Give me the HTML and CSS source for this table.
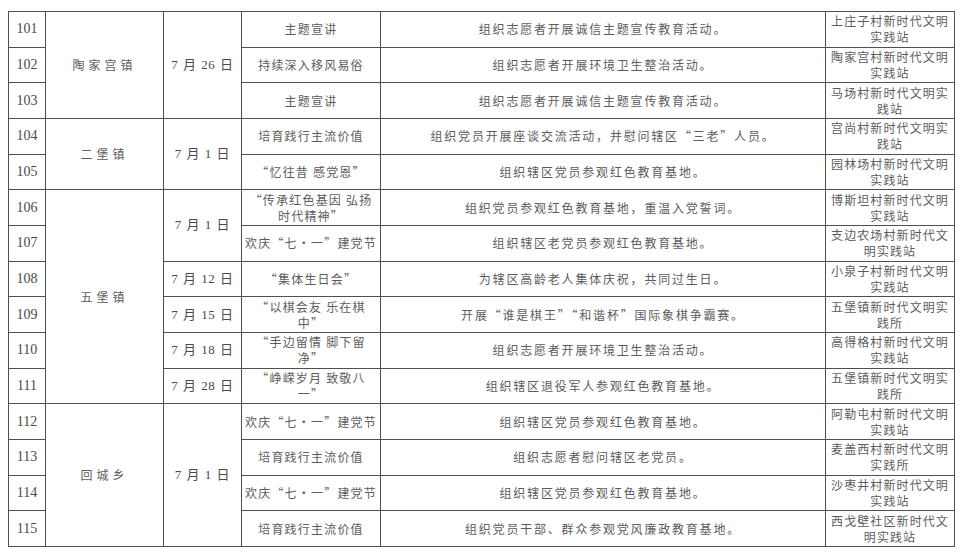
FILE: index.html
```html
<!DOCTYPE html>
<html lang="zh-CN">
<head>
<meta charset="utf-8">
<title>新时代文明实践活动</title>
<link rel="stylesheet" href="styles.css">
</head>
<body>
<table class="tbl">
<colgroup>
<col class="c-no"><col class="c-town"><col class="c-date"><col class="c-theme"><col class="c-content"><col class="c-station">
</colgroup>
<tbody>
<tr><td class="no">101</td><td class="town" rowspan="3">陶家宫镇</td><td class="date" rowspan="3">7 月 26 日</td><td class="theme">主题宣讲</td><td class="content">组织志愿者开展诚信主题宣传教育活动。</td><td class="station">上庄子村新时代文明<br>实践站</td></tr>
<tr><td class="no">102</td><td class="theme">持续深入移风易俗</td><td class="content">组织志愿者开展环境卫生整治活动。</td><td class="station">陶家宫村新时代文明<br>实践站</td></tr>
<tr><td class="no">103</td><td class="theme">主题宣讲</td><td class="content">组织志愿者开展诚信主题宣传教育活动。</td><td class="station">马场村新时代文明实<br>践站</td></tr>
<tr><td class="no">104</td><td class="town" rowspan="2">二堡镇</td><td class="date" rowspan="2">7 月 1 日</td><td class="theme">培育践行主流价值</td><td class="content">组织党员开展座谈交流活动，并慰问辖区“三老”人员。</td><td class="station">宫尚村新时代文明实<br>践站</td></tr>
<tr><td class="no">105</td><td class="theme">“忆往昔 感党恩”</td><td class="content">组织辖区党员参观红色教育基地。</td><td class="station">园林场村新时代文明<br>实践站</td></tr>
<tr><td class="no">106</td><td class="town" rowspan="6">五堡镇</td><td class="date" rowspan="2">7 月 1 日</td><td class="theme">“传承红色基因 弘扬<br>时代精神”</td><td class="content">组织党员参观红色教育基地，重温入党誓词。</td><td class="station">博斯坦村新时代文明<br>实践站</td></tr>
<tr><td class="no">107</td><td class="theme">欢庆“七•一”建党节</td><td class="content">组织辖区老党员参观红色教育基地。</td><td class="station">支边农场村新时代文<br>明实践站</td></tr>
<tr><td class="no">108</td><td class="date">7 月 12 日</td><td class="theme">“集体生日会”</td><td class="content">为辖区高龄老人集体庆祝，共同过生日。</td><td class="station">小泉子村新时代文明<br>实践站</td></tr>
<tr><td class="no">109</td><td class="date">7 月 15 日</td><td class="theme">“以棋会友 乐在棋<br>中”</td><td class="content">开展“谁是棋王”“和谐杯”国际象棋争霸赛。</td><td class="station">五堡镇新时代文明实<br>践所</td></tr>
<tr><td class="no">110</td><td class="date">7 月 18 日</td><td class="theme">“手边留情 脚下留<br>净”</td><td class="content">组织志愿者开展环境卫生整治活动。</td><td class="station">高得格村新时代文明<br>实践站</td></tr>
<tr><td class="no">111</td><td class="date">7 月 28 日</td><td class="theme">“峥嵘岁月 致敬八<br>一”</td><td class="content">组织辖区退役军人参观红色教育基地。</td><td class="station">五堡镇新时代文明实<br>践所</td></tr>
<tr><td class="no">112</td><td class="town" rowspan="4">回城乡</td><td class="date" rowspan="4">7 月 1 日</td><td class="theme">欢庆“七•一”建党节</td><td class="content">组织辖区党员参观红色教育基地。</td><td class="station">阿勒屯村新时代文明<br>实践站</td></tr>
<tr><td class="no">113</td><td class="theme">培育践行主流价值</td><td class="content">组织志愿者慰问辖区老党员。</td><td class="station">麦盖西村新时代文明<br>实践所</td></tr>
<tr><td class="no">114</td><td class="theme">欢庆“七•一”建党节</td><td class="content">组织辖区党员参观红色教育基地。</td><td class="station">沙枣井村新时代文明<br>实践站</td></tr>
<tr><td class="no">115</td><td class="theme">培育践行主流价值</td><td class="content">组织党员干部、群众参观党风廉政教育基地。</td><td class="station">西戈壁社区新时代文<br>明实践站</td></tr>
</tbody>
</table>
</body>
</html>
```
FILE: styles.css
```css
html, body {
  margin: 0;
  padding: 0;
  background: #ffffff;
}
body {
  padding: 11px 0 0 8px;
  font-family: "Noto Sans CJK SC", sans-serif;
  color: #5c5c5c;
}
.tbl {
  border-collapse: collapse;
  table-layout: fixed;
  width: 946px;
}
.c-no { width: 37px; }
.c-town { width: 118px; }
.c-date { width: 78px; }
.c-theme { width: 139px; }
.c-content { width: 445px; }
.c-station { width: 129px; }
.tbl tr {
  height: 35.67px;
}
.tbl td {
  border: 1px solid #505050;
  padding: 0 1px;
  text-align: center;
  vertical-align: middle;
  font-size: 12px;
  line-height: 16px;
  font-family: "Noto Sans CJK SC", sans-serif;
  color: #5c5c5c;
  white-space: nowrap;
  overflow: visible;
}
.tbl td.no {
  font-family: "Liberation Serif", serif;
  font-size: 14px;
  color: #4a4a4a;
}
.tbl td.town {
  letter-spacing: 4px;
}
.tbl td.date {
  font-family: "Liberation Serif", "Noto Sans CJK SC", serif;
  font-size: 13px;
  letter-spacing: 0.5px;
  word-spacing: 1px;
  color: #4a4a4a;
}
.tbl td.theme {
  letter-spacing: 1.2px;
}
.tbl td.content {
  letter-spacing: 1.8px;
}
.tbl td.station {
  letter-spacing: 1.1px;
}
```
